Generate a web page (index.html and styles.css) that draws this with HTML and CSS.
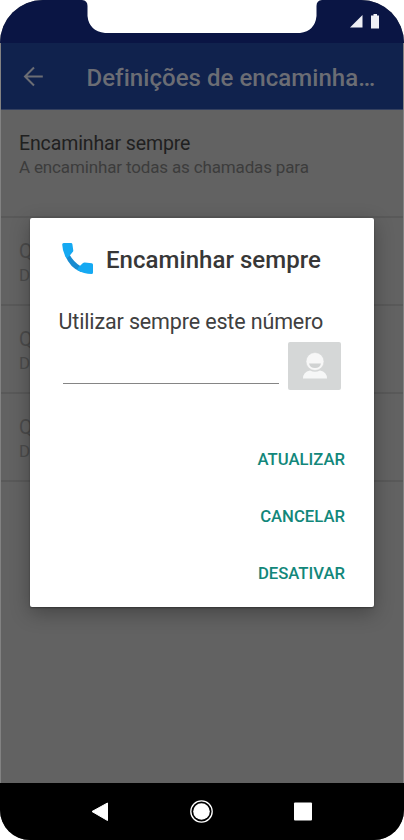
FILE: index.html
```html
<!DOCTYPE html>
<html lang="pt">
<head>
<meta charset="utf-8">
<title>Definições de encaminhamento</title>
<link rel="stylesheet" href="styles.css">
</head>
<body>
<div class="phone">
  <header class="status">
    <svg class="notch" width="404" height="34" viewBox="0 0 404 34"><path d="M82 0Q87.500 .5 87.500 6V16Q89 31 105 33H300Q315 31 316.500 16V6Q316.500 .5 322 0Z" fill="#fff"/></svg>
    <svg class="signals" width="32" height="18" viewBox="0 0 32 18"><path d="M1 15.500 13.500 3V15.500Z" fill="#eeeff5"/><path d="M22 3.500H24.500V2H28V3.500H30V16.500H22Z" fill="#eeeff5"/></svg>
  </header>
  <div class="appbar">
    <svg class="back" width="22" height="22" viewBox="0 0 22 22"><path d="M20.800 11.500H3M12 2.500 3 11.500l9 9" fill="none" stroke="#6b6d74" stroke-width="2"/></svg>
    <h1 class="title">Definições de encaminha…</h1>
  </div>
  <main class="list">
    <section class="item first"><div class="name">Encaminhar sempre</div><div class="desc">A encaminhar todas as chamadas para</div></section>
    <section class="item off"><div class="name">Q</div><div class="desc">D</div></section>
    <section class="item off"><div class="name">Q</div><div class="desc">D</div></section>
    <section class="item off"><div class="name">Q</div><div class="desc">D</div></section>
  </main>
  <nav class="nav">
    <svg width="404" height="57" viewBox="0 0 404 57"><path d="M92 28.500 107.500 20V37.500Z" fill="#fff" stroke="#fff" stroke-linejoin="round"/><circle cx="201.500" cy="28.500" r="10.700" fill="none" stroke="#fff" stroke-width="1.300"/><circle cx="201.500" cy="28.500" r="8.300" fill="#fff"/><rect x="294" y="19.500" width="18" height="18" rx="1" fill="#fff"/></svg>
  </nav>
  <div class="dialog">
    <div class="dialog-head">
      <svg class="call" width="32" height="32" viewBox="0 0 32 32"><path d="M3 12 7.500 11.500Q11.500 19 19 23.500L19 29Q8 25 3 12Z" fill="#188bd0"/><path d="M.2 1.500Q.2 0 1.700 0H9Q10.200 0 10.400 1.300L11.300 7.500 11.100 8.500 7.600 12.800 4.500 15.500Q.5 9 .2 1.500ZM16.500 24.300 21 20Q21.800 19.300 22.800 19.400L29.800 20.300Q31 20.500 31 21.800V29.500Q31 31 29.500 31 22 30.800 15 27Z" fill="#15a9f2"/></svg>
      <h2 class="heading">Encaminhar sempre</h2>
    </div>
    <label class="label" for="number">Utilizar sempre este número</label>
    <div class="entry">
      <input class="number" id="number" type="text">
      <button class="contact" type="button" aria-label="Contactos"><svg width="26" height="28" viewBox="0 0 26 28"><path d="M1 26.500Q1 20 8 18.500 13 21 18 18.500 25 20 25 26.500Z" fill="#f6f7f7"/><circle cx="13" cy="9.500" r="9" fill="#f7f7f7" stroke="#d5d7d7" stroke-width=".6"/><path d="M7 11.500H19Q18 16 13 16T7 11.500Z" fill="#d0d2d2"/></svg></button>
    </div>
    <div class="actions"><button type="button">ATUALIZAR</button><button type="button">CANCELAR</button><button type="button">DESATIVAR</button></div>
  </div>
</div>
</body>
</html>
```
FILE: styles.css
```css
* { box-sizing: border-box; }
body { margin: 0; background: #fff; font-family: Roboto, sans-serif; }
.phone { position: relative; display: flex; flex-direction: column; width: 404px; height: 840px; overflow: hidden; border-radius: 43px 43px 30px 30px; background: #626262; }
.phone::after { content: ""; position: absolute; inset: 43px 0 57px; border: solid #828282; border-width: 0 1px; pointer-events: none; }
.status { position: relative; height: 43px; background: #0a1544; }
.notch { position: absolute; top: 0; left: 0; }
.signals { position: absolute; top: 12px; left: 349px; }
.appbar { display: flex; align-items: center; height: 67px; padding-left: 22px; background: #10224d; border-bottom: 1px solid #34405f; }
.back { flex: none; }
.title { margin: 4px 0 0 42.5px; font-size: 24px; line-height: 30px; font-weight: 500; letter-spacing: .05px; color: #6b6d74; white-space: nowrap; }
.list { flex: 1; }
.item { height: 88px; padding: 20px 19px 0; border-bottom: 2px solid #595959; }
.first { height: 108px; }
.name { padding-top: 1px; font-size: 19.5px; line-height: 25px; letter-spacing: -.12px; color: #202020; white-space: nowrap; }
.desc { font-size: 17px; line-height: 22px; letter-spacing: -.15px; color: #3c3c3c; white-space: nowrap; }
.off .name, .off .desc { color: #4b4b4b; }
.nav { height: 57px; background: #000; }
.nav svg { display: block; }
.dialog { position: absolute; z-index: 1; top: 218px; left: 30px; width: 344px; height: 389px; padding: 25px 29px 0 28px; border-radius: 2px; background: #fff; box-shadow: 0 6px 20px rgba(0,0,0,.3), 0 1px 2px rgba(0,0,0,.35); }
.dialog-head { display: flex; align-items: center; height: 32px; padding-left: 4px; }
.heading { margin: 2px 0 0 12px; font-size: 24px; line-height: 30px; font-weight: 500; letter-spacing: .04px; color: #373737; white-space: nowrap; }
.label { display: block; margin-top: 33px; padding: 0 0 1px .5px; font-size: 21.5px; line-height: 27px; letter-spacing: -.14px; color: #404040; white-space: nowrap; }
.entry { display: flex; align-items: flex-start; margin-top: 6px; padding-left: 5px; }
.number { width: 216px; height: 42px; padding: 0; border: 0; border-bottom: 1px solid #858585; border-radius: 0; outline: 0; background: transparent; font: 20px Roboto, sans-serif; }
.contact { display: flex; align-items: center; justify-content: center; width: 53px; height: 48px; margin-left: 9px; padding: 0 0 1px; border: 0; border-radius: 2px; background: #d5d7d7; }
.actions { display: flex; flex-direction: column; margin-top: 41px; }
.actions button { height: 57px; padding: 0; border: 0; background: none; color: #12877a; font: 500 16.7px/57px Roboto, sans-serif; text-align: right; }
```
